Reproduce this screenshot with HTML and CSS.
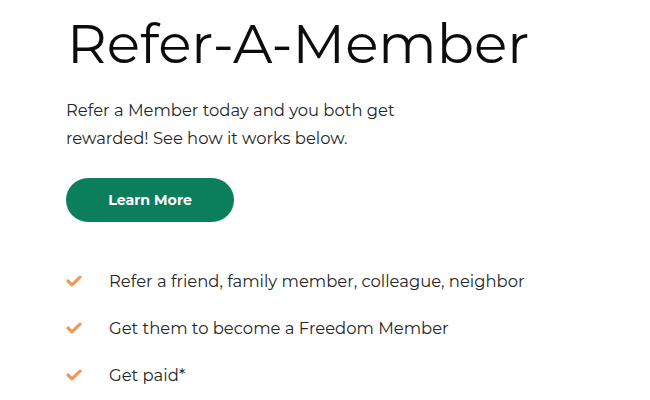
FILE: index.html
```html
<!DOCTYPE html>
<html lang="en">
<head>
<meta charset="utf-8">
<title>Refer-A-Member</title>
<link rel="stylesheet" href="styles.css">
</head>
<body>
<main class="hero">
  <h1 class="title">Refer-A-Member</h1>
  <p class="lead">Refer a Member today and you both get<br>rewarded! See how it works below.</p>
  <a class="btn" href="#">Learn More</a>
  <ul class="steps">
    <li class="step"><svg class="check" viewBox="0 0 16 12" width="16" height="12"><path d="M2 6 L6 9.8 L14 2.2" fill="none" stroke="#ec9a5b" stroke-width="3.2" stroke-linecap="round" stroke-linejoin="round"/></svg><span>Refer a friend, family member, colleague, neighbor</span></li>
    <li class="step"><svg class="check" viewBox="0 0 16 12" width="16" height="12"><path d="M2 6 L6 9.8 L14 2.2" fill="none" stroke="#ec9a5b" stroke-width="3.2" stroke-linecap="round" stroke-linejoin="round"/></svg><span>Get them to become a Freedom Member</span></li>
    <li class="step"><svg class="check" viewBox="0 0 16 12" width="16" height="12"><path d="M2 6 L6 9.8 L14 2.2" fill="none" stroke="#ec9a5b" stroke-width="3.2" stroke-linecap="round" stroke-linejoin="round"/></svg><span>Get paid*</span></li>
  </ul>
</main>
</body>
</html>
```

FILE: styles.css
```css
html, body {
  margin: 0;
  padding: 0;
  background: #fff;
}
body {
  font-family: "Montserrat", "Inter", "Noto Sans", sans-serif;
  color: #222;
}
.hero {
  padding: 14px 0 0 66px;
  display: flex;
  flex-direction: column;
  align-items: flex-start;
}
.title {
  margin: 0 0 0 1px;
  font-size: 55px;
  font-weight: 400;
  line-height: 60px;
  color: #0c0c0c;
}
.lead {
  margin: 22px 0 0;
  font-size: 16.4px;
  line-height: 28px;
  color: #262626;
}
.btn {
  margin-top: 26px;
  width: 168px;
  height: 44px;
  border-radius: 22px;
  background: #0b7e5c;
  color: #fff;
  font-weight: 700;
  font-size: 14.2px;
  text-decoration: none;
  display: flex;
  align-items: center;
  justify-content: center;
}
.steps {
  list-style: none;
  margin: 47px 0 0;
  padding: 0;
  display: flex;
  flex-direction: column;
  gap: 23px;
}
.step {
  display: flex;
  align-items: center;
  font-size: 16.4px;
  line-height: 24px;
  color: #262626;
}
.check {
  width: 16px;
  height: 12px;
  margin-right: 27px;
}
```
